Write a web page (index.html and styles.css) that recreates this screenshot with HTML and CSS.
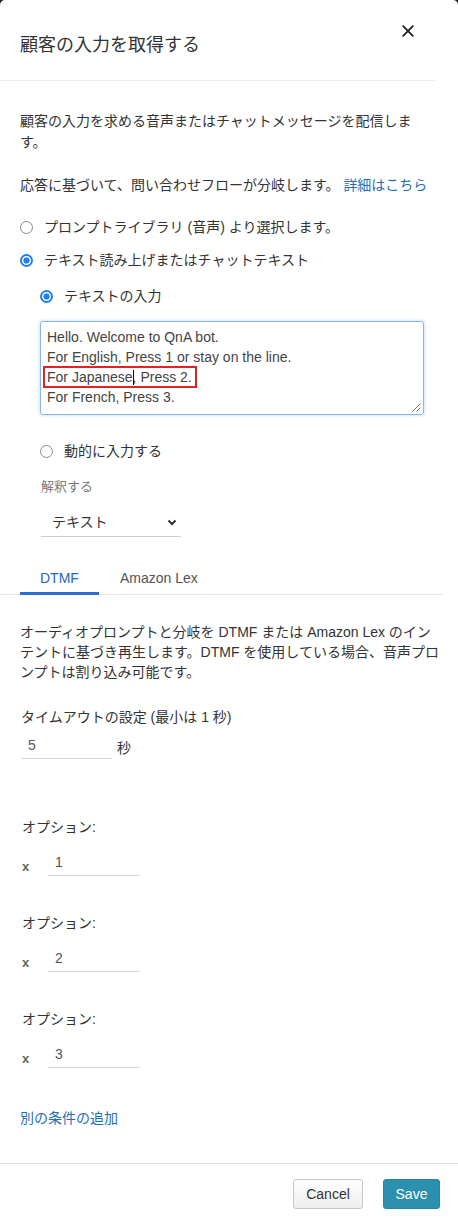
FILE: index.html
```html
<!DOCTYPE html>
<html lang="ja">
<head>
<meta charset="utf-8">
<title>顧客の入力を取得する</title>
<link rel="stylesheet" href="styles.css">
</head>
<body>
<div class="panel">
  <header class="head">
    <h1 class="title">顧客の入力を取得する</h1>
    <button class="close" aria-label="閉じる">
      <svg width="12" height="12" viewBox="0 0 12 12"><path d="M1.2 1.2L10.8 10.8M10.8 1.2L1.2 10.8" stroke="#1f1f1f" stroke-width="1.8" stroke-linecap="round"/></svg>
    </button>
  </header>

  <section class="sec1">
    <p class="desc">顧客の入力を求める音声またはチャットメッセージを配信します。</p>
    <p class="desc2">応答に基づいて、問い合わせフローが分岐します。 <a class="link">詳細はこちら</a></p>

    <div class="radio-row r1"><span class="radio"></span>プロンプトライブラリ (音声) より選択します。</div>
    <div class="radio-row r2"><span class="radio on"></span>テキスト読み上げまたはチャットテキスト</div>

    <div class="sub">
      <div class="radio-row r3"><span class="radio on"></span>テキストの入力</div>
      <div class="textarea">
        <div>Hello. Welcome to QnA bot.</div>
        <div>For English, Press 1 or stay on the line.</div>
        <div><span class="mark">For Japanese<span class="caret"></span>, Press 2.</span></div>
        <div>For French, Press 3.</div>
        <svg class="grip" width="9" height="9" viewBox="0 0 9 9"><path d="M8.5 0.5L0.5 8.5M8.5 4.5L4.5 8.5" stroke="#777" stroke-width="1"/></svg>
      </div>
      <div class="radio-row r4"><span class="radio"></span>動的に入力する</div>
      <div class="label">解釈する</div>
      <div class="select">
        <span>テキスト</span>
        <svg width="10" height="7" viewBox="0 0 10 7"><path d="M1.5 1.5L5 5L8.5 1.5" fill="none" stroke="#333" stroke-width="2"/></svg>
      </div>
    </div>
  </section>

  <nav class="tabs">
    <div class="tab active">DTMF</div>
    <div class="tab">Amazon Lex</div>
  </nav>

  <section class="sec2">
    <p class="para">オーディオプロンプトと分岐を DTMF または Amazon Lex のインテントに基づき再生します。DTMF を使用している場合、音声プロンプトは割り込み可能です。</p>

    <div class="field-label timeout">タイムアウトの設定 (最小は 1 秒)</div>
    <div class="timeout-row">
      <input class="num" type="text" value="5">
      <span class="unit">秒</span>
    </div>

    <div class="field-label opt first">オプション:</div>
    <div class="opt-row"><span class="x">x</span><input class="num opt-in" type="text" value="1"></div>

    <div class="field-label opt">オプション:</div>
    <div class="opt-row"><span class="x">x</span><input class="num opt-in" type="text" value="2"></div>

    <div class="field-label opt">オプション:</div>
    <div class="opt-row"><span class="x">x</span><input class="num opt-in" type="text" value="3"></div>

    <a class="link add">別の条件の追加</a>
  </section>

  <footer class="foot">
    <button class="btn cancel">Cancel</button>
    <button class="btn save">Save</button>
  </footer>
</div>
</body>
</html>
```

FILE: styles.css
```css
* { box-sizing: border-box; }

html, body {
  margin: 0;
  background: #1c1c1c;
}

body {
  font-family: "Liberation Sans", "Noto Sans CJK JP", sans-serif;
  font-size: 14px;
  color: #333;
}

.panel {
  background: #fff;
  width: 458px;
  height: 1226px;
  border-radius: 5px 5px 0 0;
  overflow: hidden;
}

/* header */
.head {
  display: flex;
  justify-content: space-between;
  align-items: flex-start;
  height: 81px;
  margin-right: 23px;
  padding: 24px 21px 0 20px;
  border-bottom: 1px solid #eaeaea;
}

.title {
  margin: 10px 0 0;
  font-size: 18px;
  line-height: 22px;
  font-weight: 400;
  color: #333;
}

.close {
  margin-top: 1px;
  padding: 0;
  border: 0;
  background: none;
  width: 12px;
  height: 12px;
}
.close svg { display: block; }

/* first section */
.sec1 {
  padding: 30px 22px 0 20px;
}

.desc {
  margin: 0;
  line-height: 21px;
}

.desc2 {
  margin: 22px 0 0;
  line-height: 21px;
}

.link {
  color: #1f6fb5;
  text-decoration: none;
}

.radio-row {
  display: flex;
  align-items: center;
  line-height: 20px;
}

.radio {
  flex: none;
  width: 13px;
  height: 13px;
  margin-right: 11px;
  border: 1px solid #8a8a8a;
  border-radius: 50%;
  background: #fff;
}

.radio.on {
  border: 2px solid #1f7ff0;
  background: radial-gradient(circle, #1f7ff0 0 2.8px, #fff 3.4px);
}

.r1 { margin-top: 21px; }
.r2 { margin-top: 13px; }

.sub { padding-left: 20px; }

.r3 { margin-top: 16px; }

.textarea {
  position: relative;
  margin-top: 15px;
  width: 384px;
  height: 94px;
  padding: 5px 6px;
  border: 1px solid #86b6ec;
  border-radius: 3px;
  box-shadow: 0 0 3px 1px rgba(130, 180, 240, 0.35);
  font-size: 14px;
  line-height: 20px;
  color: #444;
}

.mark {
  outline: 2px solid #e32323;
  outline-offset: 1px;
  padding: 0 2px 0 1px;
  margin: 0 -2px 0 -1px;
}

.caret {
  display: inline-block;
  width: 1px;
  height: 15px;
  margin-right: -1px;
  background: #111;
  vertical-align: -3px;
}

.grip {
  position: absolute;
  right: 2px;
  bottom: 2px;
}

.r4 { margin-top: 26px; }

.label {
  margin-top: 17px;
  padding-left: 1px;
  font-size: 13px;
  line-height: 18px;
  color: #777;
}

.select {
  display: flex;
  align-items: center;
  justify-content: space-between;
  margin: 12px 0 0 1px;
  width: 140px;
  height: 29px;
  padding: 0 4px 0 11px;
  border-bottom: 1px solid #cfcfcf;
  line-height: 28px;
  color: #333;
}
.select svg { display: block; margin-top: 1px; }

/* tabs */
.tabs {
  display: flex;
  gap: 1px;
  margin: 23px 15px 0 0;
  padding-left: 20px;
  border-bottom: 1px solid #e6e6e6;
}

.tab {
  padding: 8px 20px 4px;
  line-height: 20px;
  color: #555;
  border-bottom: 3px solid transparent;
  margin-bottom: -1px;
}

.tab.active {
  color: #2767bf;
  border-bottom-color: #2a6fce;
}

/* second section */
.sec2 {
  padding: 27px 16px 0 20px;
}

.para {
  margin: 0;
  line-height: 20px;
}

.field-label {
  line-height: 20px;
  padding-left: 2px;
}

.timeout { margin-top: 25px; padding-left: 1px; }

.timeout-row {
  display: flex;
  align-items: center;
  margin-top: 5px;
  padding-left: 1px;
}

.num {
  display: block;
  width: 91px;
  height: 27px;
  padding: 0 7px;
  border: 0;
  border-bottom: 1px solid #d5d5d5;
  border-radius: 0;
  background: transparent;
  font-family: "Liberation Sans", sans-serif;
  font-size: 14px;
  color: #555;
  outline: none;
}

.unit {
  margin-left: 5px;
  margin-top: 3px;
}

.opt.first { margin-top: 58px; }
.opt { margin-top: 37px; }

.opt-row {
  display: flex;
  align-items: flex-end;
  margin-top: 12px;
  padding-left: 2px;
}

.x {
  width: 26px;
  line-height: 18px;
  font-size: 13px;
  font-weight: 700;
  color: #666;
}

.opt-in { width: 92px; }

.add {
  display: block;
  margin-top: 40px;
  line-height: 20px;
}

/* footer */
.foot {
  display: flex;
  justify-content: flex-end;
  gap: 20px;
  margin-top: 35px;
  padding: 15px 18px 17px;
  border-top: 1px solid #dedede;
}

.btn {
  height: 30px;
  padding: 0;
  border-radius: 3px;
  font-family: "Liberation Sans", sans-serif;
  font-size: 14px;
}

.cancel {
  width: 70px;
  background: linear-gradient(#ffffff, #eeeeee);
  border: 1px solid #c6c6c6;
  color: #333;
}

.save {
  width: 57px;
  background: #2b8fae;
  border: 1px solid #2886a4;
  color: #fff;
}
```
